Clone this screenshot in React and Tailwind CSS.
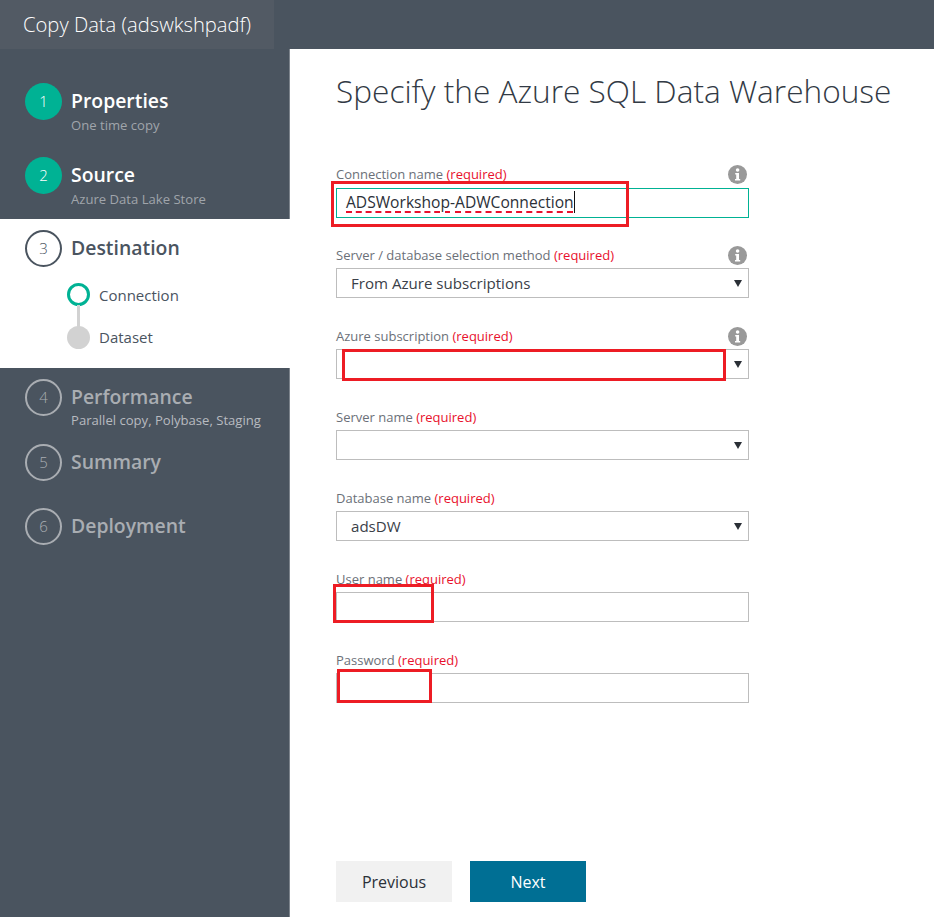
const sans = "font-['Open_Sans','Noto_Sans',sans-serif]"

const steps = [
    { n: 1, title: 'Properties', sub: 'One time copy', h: 'h-[74px]' },
    { n: 2, title: 'Source', sub: 'Azure Data Lake Store', h: 'h-[62px]' },
]
const laterSteps = [
    { n: 4, title: 'Performance', sub: 'Parallel copy, Polybase, Staging', h: 'h-[65px]' },
    { n: 5, title: 'Summary', h: 'h-[64px]' },
    { n: 6, title: 'Deployment', h: 'h-[64px]' },
]

const Required = () => <span className="text-[#e8112d]">(required)</span>

const InfoIcon = () => (
    <svg width="19" height="19" viewBox="0 0 19 19" className="absolute right-[2px] top-[1px]">
        <circle cx="9.5" cy="9.5" r="9.5" fill="#999999" />
        <circle cx="9.6" cy="5" r="1.8" fill="#ffffff" />
        <path d="M7.2 8h3.8v6h1.2v1.6H7v-1.6h1.2V9.6H7.2z" fill="#ffffff" />
    </svg>
)

const Caret = () => (
    <span className="absolute right-[6px] top-[11px] h-0 w-0 border-x-[4px] border-t-[7px] border-x-transparent border-t-[#2a2f36]" />
)

const RedBox = ({ className }) => (
    <div className={`absolute border-[3px] border-[#ed1c24] ${className}`} />
)

const Field = ({ label, info, children }) => (
    <div className="h-[81px]">
        <div className="relative h-[23px] text-[13px] leading-[20px] text-[#6b7078]">
            {label} <Required />
            {info && <InfoIcon />}
        </div>
        {children}
    </div>
)

const SelectBox = ({ value }) => (
    <div className="relative h-[30px] border border-[#bdbdbd] pl-[14px] text-[15.1px] leading-[28px] text-[#3a4048]">
        {value}
        <Caret />
    </div>
)

const InputBox = () => <div className="h-[30px] border border-[#bdbdbd]" />

const App = () => {
    return (
        <div className={`h-[923px] w-[947px] overflow-hidden bg-white ${sans}`}>
            <div className="h-[917px] w-[934px] bg-[#4a545f]">
                <div className="h-[49px]">
                    <div className="h-[49px] w-[274px] bg-[#525a64] pl-[23px] text-[20.2px] font-light leading-[48px] text-white">
                        Copy Data (adswkshpadf)
                    </div>
                </div>
                <div className="flex h-[868px]">
                    <div className="w-[290px] shrink-0 border-r border-[#7d848c]">
                        <div className="pt-[34px]">
                            {steps.map(s => (
                                <div key={s.n} className={`flex gap-[9px] pl-[25px] ${s.h}`}>
                                    <div className="flex h-[37px] w-[37px] items-center justify-center rounded-full bg-[#00b294] text-[15px] font-light text-white">{s.n}</div>
                                    <div className="mt-[1px]">
                                        <div className="text-[19.4px] font-semibold leading-[34px] text-white">{s.title}</div>
                                        <div className="-mt-[2px] text-[13.1px] leading-[18px] text-[#a0a5ab]">{s.sub}</div>
                                    </div>
                                </div>
                            ))}
                        </div>
                        <div className="-mr-px h-[149px] bg-white pt-[11px]">
                            <div className="flex gap-[9px] pl-[25px]">
                                <div className="flex h-[37px] w-[37px] items-center justify-center rounded-full border-[2px] border-[#4a545f] text-[15px] font-light text-[#4a545f]">3</div>
                                <div className="mt-[1px] text-[19.4px] font-semibold leading-[34px] text-[#4a545f]">Destination</div>
                            </div>
                            <div className="mt-[16px] pl-[67px]">
                                <div className="relative flex h-[43px] gap-[9px]">
                                    <div className="h-[23px] w-[23px] rounded-full border-[3px] border-[#00b294]" />
                                    <div className="text-[15px] leading-[24px] text-[#4a545f]">Connection</div>
                                    <div className="absolute left-[10px] top-[22px] h-[22px] w-[3px] bg-[#d2d2d2]" />
                                </div>
                                <div className="flex gap-[9px]">
                                    <div className="h-[23px] w-[23px] rounded-full bg-[#d2d2d2]" />
                                    <div className="text-[15px] leading-[22px] text-[#4a545f]">Dataset</div>
                                </div>
                            </div>
                        </div>
                        <div className="pt-[11px]">
                            {laterSteps.map(s => (
                                <div key={s.n} className={`flex gap-[9px] pl-[25px] ${s.h}`}>
                                    <div className="flex h-[37px] w-[37px] items-center justify-center rounded-full border-[2px] border-[#a9adb2] text-[15px] font-light text-[#a9adb2]">{s.n}</div>
                                    <div className="mt-[1px]">
                                        <div className="text-[19.4px] font-semibold leading-[34px] text-[#a9adb2]">{s.title}</div>
                                        {s.sub && <div className="-mt-[3px] text-[13.1px] leading-[18px] text-[#b8bbc0]">{s.sub}</div>}
                                    </div>
                                </div>
                            ))}
                        </div>
                    </div>
                    <div className="flex-1 bg-white pl-[46px]">
                        <h1 className="pt-[21px] text-[31.6px] font-light leading-[42px] text-[#323a45]">Specify the Azure SQL Data Warehouse</h1>
                        <div className="relative mt-[52px] w-[413px]">
                            <Field label="Connection name" info>
                                <div className="mt-[1px] h-[30px] border border-[#00b294] pl-[9px] text-[15.6px] leading-[27px] text-[#2b3038]">
                                    <span className="underline decoration-[#e8112d] decoration-dashed decoration-2 underline-offset-[3px]">ADSWorkshop</span>
                                    -
                                    <span className="underline decoration-[#e8112d] decoration-dashed decoration-2 underline-offset-[3px]">ADWConnection</span>
                                    <span className="border-l border-[#111]" />
                                </div>
                            </Field>
                            <Field label="Server / database selection method" info>
                                <SelectBox value="From Azure subscriptions" />
                            </Field>
                            <Field label="Azure subscription" info>
                                <SelectBox value="" />
                            </Field>
                            <Field label="Server name">
                                <SelectBox value="" />
                            </Field>
                            <Field label="Database name">
                                <SelectBox value="adsDW" />
                            </Field>
                            <Field label="User name">
                                <InputBox />
                            </Field>
                            <Field label="Password">
                                <InputBox />
                            </Field>
                            <RedBox className="left-[-5px] top-[17px] h-[46px] w-[298px]" />
                            <RedBox className="left-[6px] top-[185px] h-[32px] w-[384px]" />
                            <RedBox className="left-[-3px] top-[420px] h-[39px] w-[101px]" />
                            <RedBox className="left-[1px] top-[505px] h-[34px] w-[95px] bg-white" />
                        </div>
                        <div className="mt-[130px] flex gap-[18px]">
                            <button className="h-[41px] w-[116px] bg-[#f1f1f1] text-[16px] text-[#2b3038]">Previous</button>
                            <button className="h-[41px] w-[116px] bg-[#006f94] text-[16px] text-white">Next</button>
                        </div>
                    </div>
                </div>
            </div>
        </div>
    )
}

export default App
